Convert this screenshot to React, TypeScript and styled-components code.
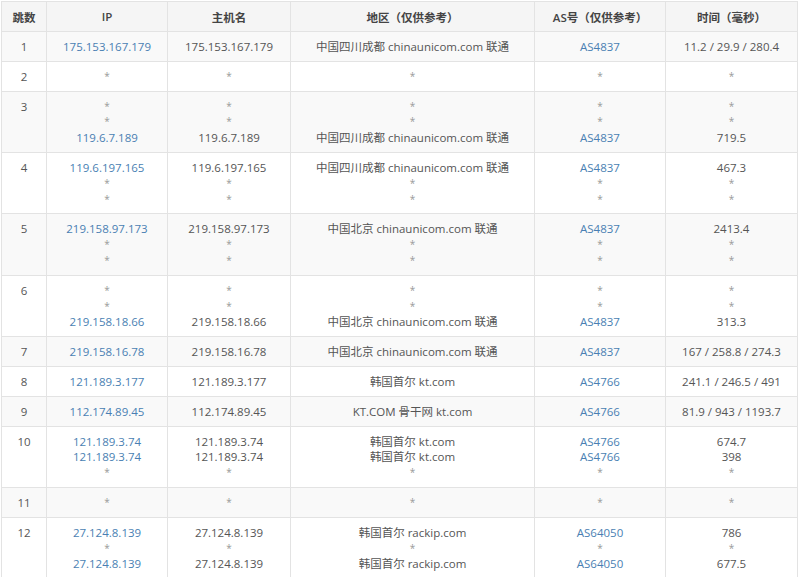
import React from 'react'
import styled, { createGlobalStyle } from 'styled-components'

const Global = createGlobalStyle`
  body { margin: 0; background: #fff; }
`

const Table = styled.table`
  margin: 1px;
  width: 797px;
  border-collapse: collapse;
  font-family: 'Open Sans', 'Noto Sans CJK SC', sans-serif;
  font-size: 11.5px;
  color: #555;
  table-layout: fixed;
`
const Th = styled.th<{ w?: number }>`
  width: ${({ w }) => (w ? `${w}px` : 'auto')};
  height: 29px;
  background: #f5f5f5;
  border: 1px solid #e3e3e3;
  font-weight: 600;
  color: #444;
  text-align: center;
  padding: 0;
`
const Tr = styled.tr<{ shade: boolean }>`
  background: ${({ shade }) => (shade ? '#f9f9f9' : '#fff')};
`
const Td = styled.td`
  border: 1px solid #e3e3e3;
  text-align: center;
  vertical-align: top;
  padding: 7px 2px 6px;
  line-height: 15.8px;
  white-space: nowrap;
  overflow: hidden;
`
const Line = styled.div<{ link?: boolean }>`
  color: ${({ link }) => (link ? '#4a7fb3' : '#555')};
`
const Star = styled.div`
  color: #999;
  font-size: 10px;
`

type Hop = { n: number; ip: string[]; host: string[]; geo: string[]; as: string[]; t: string[] }

const U = '中国四川成都 chinaunicom.com 联通'
const B = '中国北京 chinaunicom.com 联通'
const hops: Hop[] = [
  { n: 1, ip: ['175.153.167.179'], host: ['175.153.167.179'], geo: [U], as: ['AS4837'], t: ['11.2 / 29.9 / 280.4'] },
  { n: 2, ip: ['*'], host: ['*'], geo: ['*'], as: ['*'], t: ['*'] },
  { n: 3, ip: ['*', '*', '119.6.7.189'], host: ['*', '*', '119.6.7.189'], geo: ['*', '*', U], as: ['*', '*', 'AS4837'], t: ['*', '*', '719.5'] },
  { n: 4, ip: ['119.6.197.165', '*', '*'], host: ['119.6.197.165', '*', '*'], geo: [U, '*', '*'], as: ['AS4837', '*', '*'], t: ['467.3', '*', '*'] },
  { n: 5, ip: ['219.158.97.173', '*', '*'], host: ['219.158.97.173', '*', '*'], geo: [B, '*', '*'], as: ['AS4837', '*', '*'], t: ['2413.4', '*', '*'] },
  { n: 6, ip: ['*', '*', '219.158.18.66'], host: ['*', '*', '219.158.18.66'], geo: ['*', '*', B], as: ['*', '*', 'AS4837'], t: ['*', '*', '313.3'] },
  { n: 7, ip: ['219.158.16.78'], host: ['219.158.16.78'], geo: [B], as: ['AS4837'], t: ['167 / 258.8 / 274.3'] },
  { n: 8, ip: ['121.189.3.177'], host: ['121.189.3.177'], geo: ['韩国首尔 kt.com'], as: ['AS4766'], t: ['241.1 / 246.5 / 491'] },
  { n: 9, ip: ['112.174.89.45'], host: ['112.174.89.45'], geo: ['KT.COM 骨干网 kt.com'], as: ['AS4766'], t: ['81.9 / 943 / 1193.7'] },
  { n: 10, ip: ['121.189.3.74', '121.189.3.74', '*'], host: ['121.189.3.74', '121.189.3.74', '*'], geo: ['韩国首尔 kt.com', '韩国首尔 kt.com', '*'], as: ['AS4766', 'AS4766', '*'], t: ['674.7', '398', '*'] },
  { n: 11, ip: ['*'], host: ['*'], geo: ['*'], as: ['*'], t: ['*'] },
  { n: 12, ip: ['27.124.8.139', '*', '27.124.8.139'], host: ['27.124.8.139', '*', '27.124.8.139'], geo: ['韩国首尔 rackip.com', '*', '韩国首尔 rackip.com'], as: ['AS64050', '*', 'AS64050'], t: ['786', '*', '677.5'] },
]

const Cell = ({ items, link }: { items: string[]; link?: boolean }) => (
  <Td>
    {items.map((s, i) => (s === '*' ? <Star key={i}>*</Star> : <Line key={i} link={link}>{s}</Line>))}
  </Td>
)

export default function App() {
  return (
    <>
      <Global />
      <Table>
        <thead>
          <tr>
            <Th w={44}>跳数</Th>
            <Th w={120}>IP</Th>
            <Th w={122}>主机名</Th>
            <Th w={243}>地区（仅供参考）</Th>
            <Th w={130}>AS号（仅供参考）</Th>
            <Th>时间（毫秒）</Th>
          </tr>
        </thead>
        <tbody>
          {hops.map((h) => (
            <Tr key={h.n} shade={h.n % 2 === 1}>
              <Td>{h.n}</Td>
              <Cell items={h.ip} link />
              <Cell items={h.host} />
              <Cell items={h.geo} />
              <Cell items={h.as} link />
              <Cell items={h.t} />
            </Tr>
          ))}
        </tbody>
      </Table>
    </>
  )
}
